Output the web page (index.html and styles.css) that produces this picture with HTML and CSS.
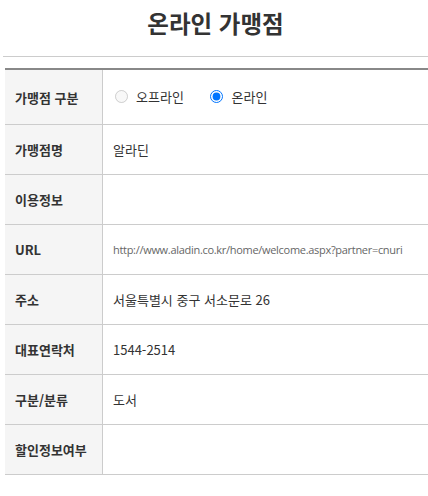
FILE: index.html
```html
<!DOCTYPE html>
<html lang="ko">
<head>
    <meta charset="UTF-8">
    <meta name="viewport" content="width=device-width, initial-scale=1.0">
    <title>온라인 가맹점</title>
    <link rel="stylesheet" href="styles.css">
</head>
<body>
    <div class="wrap">
        <h2 class="title">온라인 가맹점</h2>
        <div class="info">
            <table class="info-table">
                <tr>
                    <th>가맹점 구분</th>
                    <td>
                        <label class="radio"><input type="radio" name="kind" disabled> 오프라인</label>
                        <label class="radio"><input type="radio" name="kind" checked> 온라인</label>
                    </td>
                </tr>
                <tr>
                    <th>가맹점명</th>
                    <td>알라딘</td>
                </tr>
                <tr>
                    <th>이용정보</th>
                    <td></td>
                </tr>
                <tr>
                    <th>URL</th>
                    <td class="url">http://www.aladin.co.kr/home/welcome.aspx?partner=cnuri</td>
                </tr>
                <tr>
                    <th>주소</th>
                    <td>서울특별시 중구 서소문로 26</td>
                </tr>
                <tr>
                    <th>대표연락처</th>
                    <td>1544-2514</td>
                </tr>
                <tr>
                    <th>구분/분류</th>
                    <td>도서</td>
                </tr>
                <tr>
                    <th>할인정보여부</th>
                    <td></td>
                </tr>
            </table>
        </div>
    </div>
</body>
</html>
```

FILE: styles.css
```css
body {
    margin: 0;
    padding: 0;
    font-family: "Noto Sans CJK KR", "Noto Sans", sans-serif;
    color: #333;
    background: #fff;
    overflow: hidden;
}
.wrap {
    padding-left: 3px;
}
.title {
    margin: 0;
    height: 56px;
    line-height: 46px;
    text-align: center;
    font-size: 23.5px;
    font-weight: bold;
    color: #333;
    border-bottom: 1px solid #ccc;
}
.info {
    padding: 11px 0 0 2px;
}
.info-table {
    width: 430px;
    border-collapse: collapse;
    border-top: 2px solid #888;
    font-size: 13px;
}
.info-table th,
.info-table td {
    height: 49px;
    padding: 0 10px;
    border-bottom: 1px solid #ccc;
    text-align: left;
}
.info-table th {
    width: 77px;
    background: #f5f5f5;
    border-right: 1px solid #ccc;
    font-weight: bold;
    color: #333;
}
.info-table td {
    color: #333;
}
.info-table tr:first-child th,
.info-table tr:first-child td {
    height: 54px;
}
.info-table .url {
    font-family: "Open Sans", sans-serif;
    font-size: 11px;
    letter-spacing: -0.3px;
    color: #666;
}
.radio {
    display: inline-flex;
    align-items: center;
    margin-right: 21px;
}
.radio input {
    width: 13px;
    height: 13px;
    margin: 0 8px 0 2px;
}
```
